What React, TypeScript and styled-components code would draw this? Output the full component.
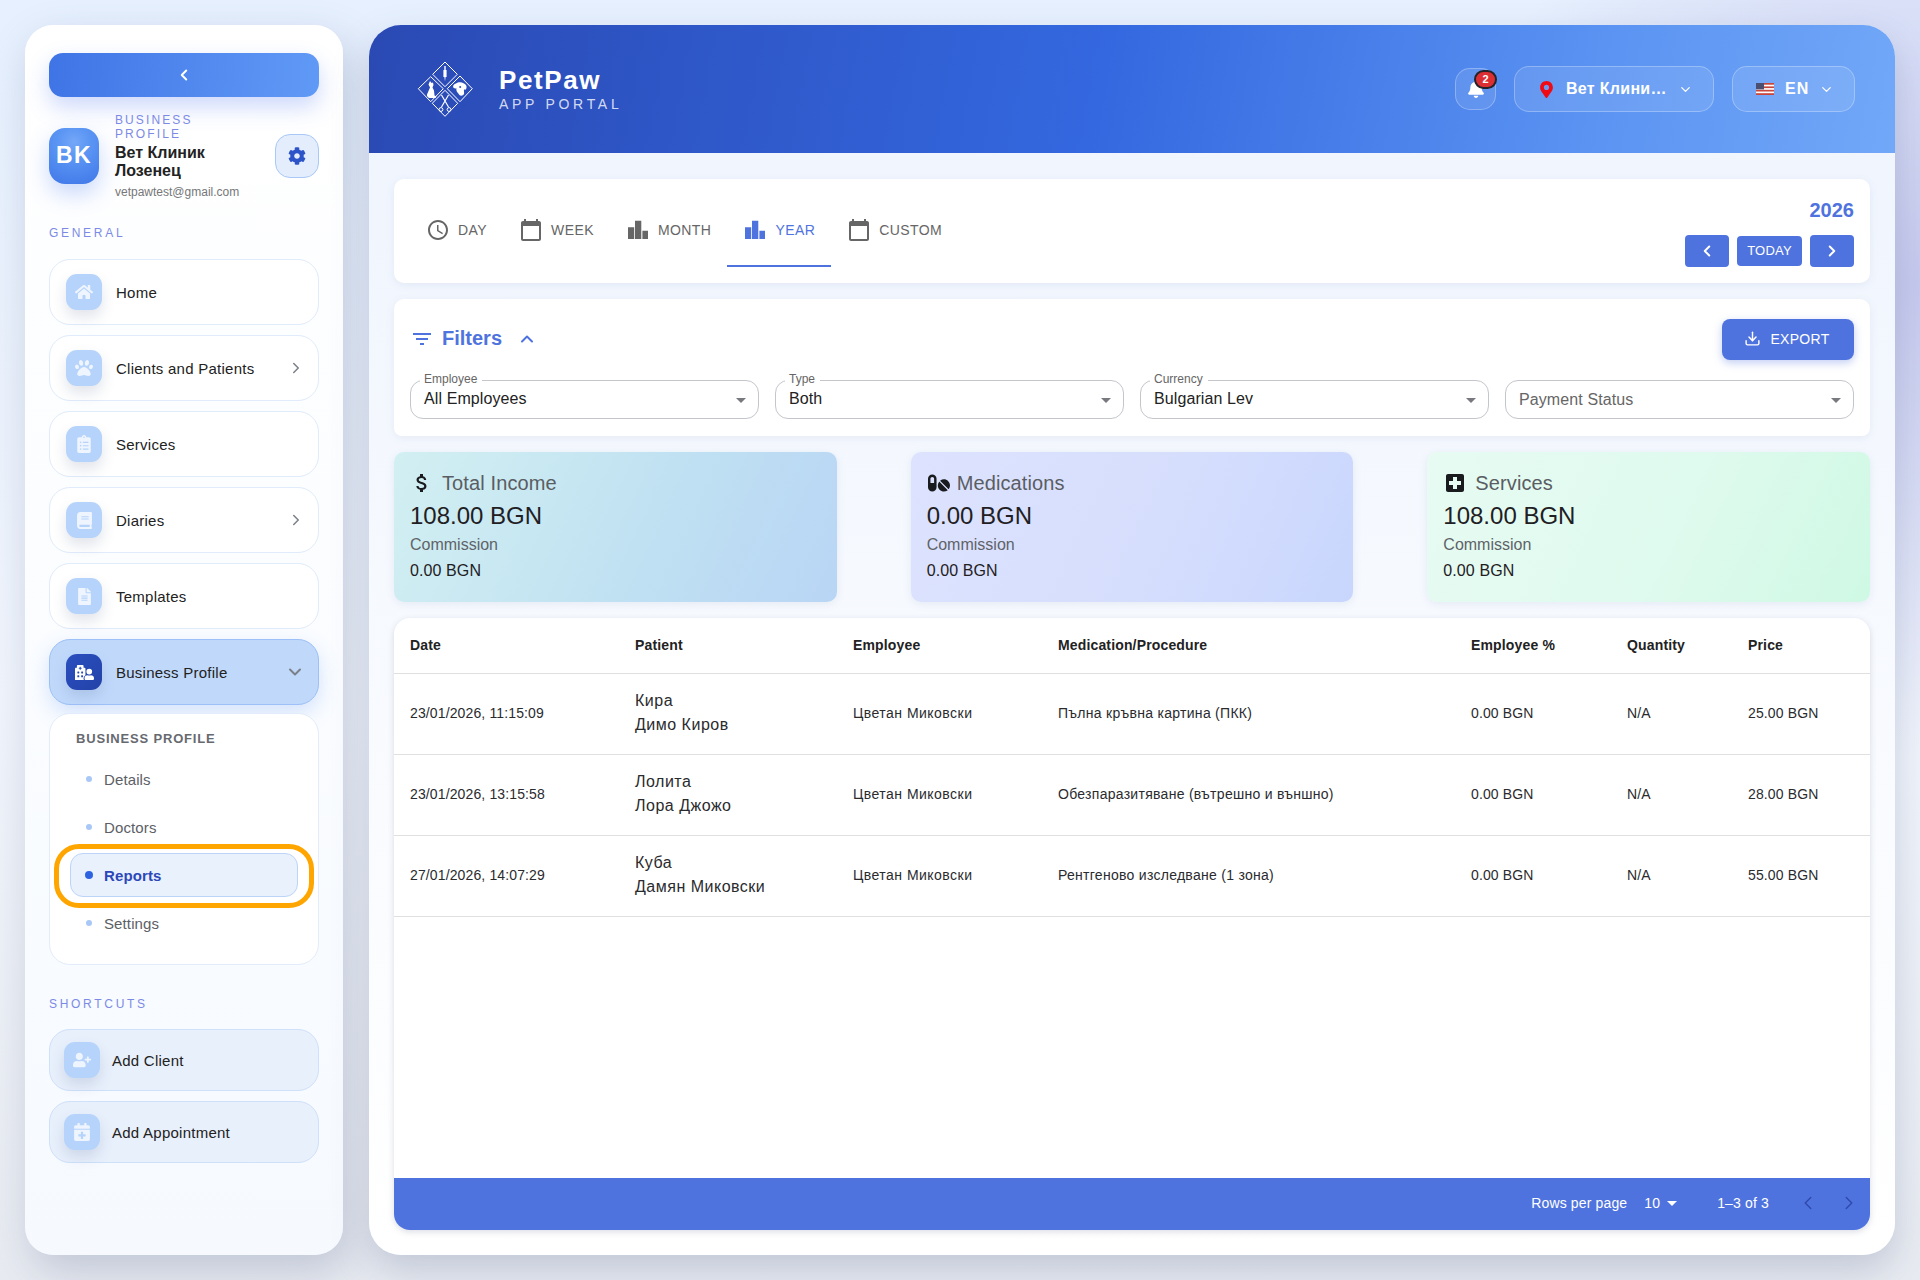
import React from "react";
import styled, { createGlobalStyle } from "styled-components";
import { ChevronLeft, ChevronRight, ChevronDown, ChevronUp, Download } from "lucide-react";
import {
  FaHome, FaPaw, FaClipboardList, FaBook, FaFileAlt, FaHospitalUser, FaUserPlus, FaCalendarPlus, FaCog, FaBell, FaMapMarkerAlt, FaPills,
} from "react-icons/fa";
import { MdAccessTime, MdCalendarToday, MdFilterList, MdArrowDropDown, MdAttachMoney, MdLocalHospital } from "react-icons/md";

const Global = createGlobalStyle`
  html, body { margin: 0; padding: 0; }
  body {
    font-family: "Liberation Sans", Arial, sans-serif;
    background:
      radial-gradient(circle at 100% 22%, #c6c9ee 0%, rgba(198,201,238,0) 22%),
      linear-gradient(180deg, #e6f0fe 0%, #f1f5fc 55%, #e8ebf1 100%);
    min-height: 1280px;
  }
  * { box-sizing: border-box; }
`;

const Page = styled.div`
  display: flex;
  gap: 26px;
  height: 1280px;
  padding: 25px;
`;

const Sidebar = styled.aside`
  width: 318px;
  flex: none;
  display: flex;
  flex-direction: column;
  padding: 28px 24px;
  border-radius: 28px;
  background: linear-gradient(180deg, #ffffff 0%, #f6faff 100%);
  box-shadow: 6px 16px 40px rgba(85, 100, 140, 0.27);
`;

const Toggle = styled.button`
  height: 44px;
  border: none;
  border-radius: 14px;
  background: linear-gradient(95deg, #3f74e6 0%, #609af6 100%);
  color: #fff;
  display: flex;
  align-items: center;
  justify-content: center;
  box-shadow: 0 10px 22px rgba(80, 120, 240, 0.28);
  padding: 0;
`;

const Profile = styled.div`
  display: flex;
  align-items: center;
  margin-top: 15px;
`;

const Avatar = styled.div`
  width: 50px;
  height: 56px;
  flex: none;
  border-radius: 16px;
  display: flex;
  align-items: center;
  justify-content: center;
  color: #fff;
  font-size: 23px;
  font-weight: 700;
  letter-spacing: 1.5px;
  background: radial-gradient(circle at 50% 25%, #74a7f7 0%, #5d97f4 30%, #3f77e8 100%);
  box-shadow: 0 10px 22px rgba(80, 130, 240, 0.3);
`;

const ProfileText = styled.div`
  width: 140px;
  margin-left: 16px;
  flex: none;
`;

const Eyebrow = styled.div`
  margin-top: 1px;
  font-size: 12px;
  line-height: 14px;
  letter-spacing: 2.1px;
  color: #7c8ae6;
`;

const ClinicName = styled.div`
  margin-top: 3px;
  font-size: 16px;
  line-height: 18px;
  font-weight: 700;
  color: #222;
`;

const Email = styled.div`
  margin-top: 5px;
  font-size: 12px;
  line-height: 14px;
  color: #777;
  white-space: nowrap;
`;

const GearButton = styled.button`
  width: 44px;
  height: 44px;
  flex: none;
  margin-left: auto;
  border-radius: 15px;
  border: 1px solid #a8c8f8;
  background: #e4edfc;
  color: #2c54c8;
  display: flex;
  align-items: center;
  justify-content: center;
  padding: 0;
`;

const SectionLabel = styled.div<{ $top: number; $bottom: number }>`
  margin-top: ${(p) => p.$top}px;
  margin-bottom: ${(p) => p.$bottom}px;
  font-size: 12px;
  line-height: 14px;
  letter-spacing: 2.7px;
  color: #7c8ae6;
`;

const NavList = styled.nav`
  display: flex;
  flex-direction: column;
  gap: 10px;
`;

const NavItem = styled.div<{ $active?: boolean }>`
  height: 66px;
  display: flex;
  align-items: center;
  padding: 0 16px;
  border-radius: 21px;
  border: 1px solid ${(p) => (p.$active ? "#9cc0f7" : "#e0ebfb")};
  background: ${(p) => (p.$active ? "#c0d9fb" : "#fff")};
  box-shadow: ${(p) => (p.$active ? "0 8px 20px rgba(100,150,245,0.25)" : "none")};
  font-size: 15px;
  letter-spacing: 0.25px;
  color: #222;
`;

const IconTile = styled.span<{ $dark?: boolean }>`
  width: 36px;
  height: 36px;
  flex: none;
  border-radius: 11px;
  display: flex;
  align-items: center;
  justify-content: center;
  color: ${(p) => (p.$dark ? "#fff" : "#eef5ff")};
  background: ${(p) => (p.$dark ? "linear-gradient(135deg,#2b4fc0,#2342a8)" : "#b6d3fb")};
  box-shadow: 0 7px 14px rgba(70, 90, 130, 0.16);
`;

const NavLabel = styled.span`
  margin-left: 14px;
  flex: 1;
`;

const NavChevron = styled.span`
  display: flex;
  color: #7a7f88;
  margin-right: -3px;
`;

const SubPanel = styled.div`
  margin-top: -2px;
  height: 252px;
  padding: 17px 20px;
  border-radius: 21px;
  border: 1px solid #e2ecfb;
  background: #fff;
`;

const SubTitle = styled.div`
  margin-left: 6px;
  font-size: 13px;
  line-height: 15px;
  font-weight: 700;
  letter-spacing: 0.82px;
  color: #666a70;
  margin-bottom: 11px;
`;

const SubList = styled.div`
  display: flex;
  flex-direction: column;
  gap: 4px;
`;

const SubItem = styled.div<{ $active?: boolean }>`
  position: relative;
  height: 44px;
  display: flex;
  align-items: center;
  gap: 12px;
  padding: 0 15px;
  border-radius: 13px;
  border: 1px solid ${(p) => (p.$active ? "#bcd4f9" : "transparent")};
  background: ${(p) => (p.$active ? "#e9f1fd" : "transparent")};
  font-size: 15px;
  letter-spacing: 0.12px;
  font-weight: ${(p) => (p.$active ? 700 : 400)};
  color: ${(p) => (p.$active ? "#2c48b8" : "#5c6066")};
`;

const Dot = styled.span<{ $active?: boolean }>`
  width: ${(p) => (p.$active ? 8 : 6)}px;
  height: ${(p) => (p.$active ? 8 : 6)}px;
  margin: 0 ${(p) => (p.$active ? -1 : 0)}px;
  border-radius: 50%;
  background: ${(p) => (p.$active ? "#2d63e0" : "#a9c8f8")};
`;

const HighlightRing = styled.span`
  position: absolute;
  left: -17px;
  right: -17px;
  top: -10px;
  bottom: -12px;
  border: 5px solid #ffa500;
  border-radius: 25px;
  pointer-events: none;
`;

const Shortcut = styled.div`
  height: 62px;
  display: flex;
  align-items: center;
  padding: 0 14px;
  border-radius: 21px;
  border: 1px solid #cfe0fb;
  background: #e8f0fc;
  font-size: 15px;
  letter-spacing: 0.25px;
  color: #222;
`;

const ShortcutLabel = styled.span`
  margin-left: 12px;
`;

const Main = styled.main`
  flex: 1;
  min-width: 0;
  display: flex;
  flex-direction: column;
  border-radius: 32px;
  overflow: hidden;
  background: linear-gradient(180deg, #eef4fe 0%, #f6f9fe 45%, #ffffff 100%);
  box-shadow: 0 16px 36px rgba(85, 100, 140, 0.26);
`;

const Header = styled.header`
  height: 128px;
  flex: none;
  padding: 0 40px 0 48px;
  display: flex;
  align-items: center;
  justify-content: space-between;
  background: linear-gradient(100deg, #2a49b3 0%, #3468e0 48%, #5a93f2 80%, #72a8f8 100%);
  color: #fff;
`;

const Brand = styled.div`
  display: flex;
  align-items: center;
  gap: 26px;
`;

const BrandText = styled.div`
  display: flex;
  flex-direction: column;
`;

const BrandName = styled.div`
  font-size: 26px;
  line-height: 30px;
  font-weight: 700;
  letter-spacing: 1.6px;
`;

const BrandSub = styled.div`
  font-size: 14px;
  line-height: 18px;
  letter-spacing: 3.7px;
  color: rgba(255, 255, 255, 0.8);
`;

const HeaderControls = styled.div`
  display: flex;
  align-items: center;
  gap: 18px;
`;

const GlassButton = styled.div<{ $w: number; $h: number; $pad?: number }>`
  position: relative;
  width: ${(p) => p.$w}px;
  height: ${(p) => p.$h}px;
  display: flex;
  align-items: center;
  justify-content: ${(p) => (p.$pad ? "flex-start" : "center")};
  padding-left: ${(p) => p.$pad ?? 0}px;
  border-radius: 15px;
  border: 1px solid rgba(255, 255, 255, 0.28);
  background: rgba(255, 255, 255, 0.1);
  color: #fff;
  font-size: 16px;
  font-weight: 700;
`;

const Badge = styled.span`
  position: absolute;
  top: 1px;
  right: -2px;
  width: 23px;
  height: 19px;
  border-radius: 10px;
  border: 2px solid #23242a;
  background: #dc2f34;
  color: #fff;
  font-size: 11px;
  line-height: 15px;
  text-align: center;
  font-weight: 700;
`;

const ClinicLabel = styled.span`
  width: 103px;
  margin: 0 9px 0 11px;
  overflow: hidden;
  white-space: nowrap;
  text-overflow: ellipsis;
  letter-spacing: 0.3px;
`;

const LangLabel = styled.span`
  margin: 0 9px 0 11px;
  letter-spacing: 1.2px;
`;

const Body = styled.div`
  flex: 1;
  min-height: 0;
  padding: 26px 25px 25px;
  display: flex;
  flex-direction: column;
  gap: 16px;
`;

const TabsCard = styled.section`
  height: 104px;
  flex: none;
  padding: 0 16px;
  border-radius: 10px;
  background: #fff;
  box-shadow: 0 2px 8px rgba(100, 120, 170, 0.1);
  display: flex;
  align-items: center;
  justify-content: space-between;
`;

const Tabs = styled.div`
  display: flex;
`;

const Tab = styled.div<{ $active?: boolean }>`
  height: 72px;
  display: flex;
  align-items: center;
  gap: 8px;
  padding: 0 16px;
  font-size: 14px;
  letter-spacing: 0.42px;
  color: ${(p) => (p.$active ? "#4f73de" : "#666")};
  border-bottom: 2px solid ${(p) => (p.$active ? "#4f73de" : "transparent")};
`;

const DateNav = styled.div`
  align-self: flex-end;
  padding-bottom: 16px;
  display: flex;
  flex-direction: column;
  align-items: flex-end;
  gap: 13px;
`;

const YearText = styled.div`
  font-size: 20px;
  line-height: 24px;
  font-weight: 700;
  color: #4f73de;
`;

const DateButtons = styled.div`
  display: flex;
  align-items: center;
  gap: 8px;
`;

const DateButton = styled.button<{ $wide?: boolean }>`
  width: ${(p) => (p.$wide ? 65 : 44)}px;
  height: ${(p) => (p.$wide ? 30 : 32)}px;
  padding: 0 0 ${(p) => (p.$wide ? 2 : 0)}px;
  border: none;
  border-radius: 4px;
  background: #4f73de;
  color: #fff;
  font-family: inherit;
  font-size: 13px;
  letter-spacing: 0.2px;
  display: flex;
  align-items: center;
  justify-content: center;
`;

const FiltersCard = styled.section`
  height: 137px;
  flex: none;
  padding: 20px 16px 17px;
  border-radius: 10px 10px 8px 8px;
  background: #fff;
  box-shadow: 0 2px 8px rgba(100, 120, 170, 0.1);
`;

const FilterTop = styled.div`
  height: 41px;
  display: flex;
  align-items: center;
  justify-content: space-between;
  margin-bottom: 20px;
`;

const FilterTitle = styled.div`
  display: flex;
  align-items: center;
  color: #4f73de;
  font-size: 20px;
  font-weight: 700;
  gap: 8px;
  padding-bottom: 2px;
`;

const FilterToggle = styled.span`
  display: flex;
  margin-left: 7px;
`;

const ExportButton = styled.button`
  width: 132px;
  height: 41px;
  padding: 0 2px 2px 0;
  border: none;
  border-radius: 8px;
  background: #4f73de;
  color: #fff;
  font-family: inherit;
  font-size: 14px;
  letter-spacing: 0.3px;
  display: flex;
  align-items: center;
  justify-content: center;
  gap: 9px;
  box-shadow: 0 3px 8px rgba(80, 115, 222, 0.35);
`;

const SelectRow = styled.div`
  display: grid;
  grid-template-columns: repeat(4, 1fr);
  gap: 16px;
`;

const SelectBox = styled.div`
  position: relative;
  height: 39px;
  display: flex;
  align-items: center;
  justify-content: space-between;
  padding: 0 5px 0 13px;
  border-radius: 13px;
  border: 1px solid #c4c6cb;
  background: #fff;
`;

const SelectValue = styled.span<{ $placeholder?: boolean }>`
  margin-top: ${(p) => (p.$placeholder ? 0 : -2)}px;
  font-size: 16px;
  letter-spacing: 0.1px;
  color: ${(p) => (p.$placeholder ? "#666" : "#222")};
`;

const FloatLabel = styled.span`
  position: absolute;
  left: 9px;
  top: -9px;
  padding: 0 5px 0 4px;
  font-size: 12px;
  line-height: 14px;
  color: #666;
  background: #fff;
`;

const Caret = styled.span`
  display: flex;
  color: #77797e;
`;

const Stats = styled.section`
  display: grid;
  grid-template-columns: repeat(3, 1fr);
  gap: 74px;
  flex: none;
`;

const StatCard = styled.div<{ $bg: string }>`
  height: 150px;
  padding: 16px;
  border-radius: 10px;
  background: ${(p) => p.$bg};
  box-shadow: 0 2px 8px rgba(100, 120, 170, 0.12);
`;

const StatTitle = styled.div<{ $gap: number }>`
  height: 30px;
  display: flex;
  align-items: center;
  gap: ${(p) => p.$gap}px;
  font-size: 20px;
  letter-spacing: 0.12px;
  color: #5a5d62;
`;

const StatIcon = styled.span`
  width: 24px;
  height: 24px;
  display: flex;
  align-items: center;
  justify-content: center;
  color: #1a1b1e;
`;

const StatValue = styled.div`
  font-size: 24px;
  line-height: 36px;
  color: #1f2023;
`;

const StatCaption = styled.div`
  font-size: 16px;
  line-height: 22px;
  color: #5f6368;
`;

const StatSub = styled.div`
  margin-top: 4px;
  font-size: 16px;
  line-height: 22px;
  letter-spacing: 0.1px;
  color: #1f2023;
`;

const TableCard = styled.section`
  flex: 1;
  min-height: 0;
  display: flex;
  flex-direction: column;
  border-radius: 16px;
  overflow: hidden;
  background: #fff;
  box-shadow: 0 2px 6px rgba(80, 90, 120, 0.2);
`;

const TableArea = styled.div`
  flex: 1;
`;

const Table = styled.table`
  width: 100%;
  table-layout: fixed;
  border-collapse: collapse;
`;

const Th = styled.th<{ $w: number }>`
  width: ${(p) => p.$w}px;
  height: 55px;
  padding: 0 16px;
  text-align: left;
  font-size: 14px;
  font-weight: 700;
  letter-spacing: 0.15px;
  color: #222;
  border-bottom: 1px solid #e0e0e0;
`;

const Td = styled.td<{ $spacing?: number }>`
  height: 81px;
  padding: 0 16px 1px;
  font-size: 14px;
  letter-spacing: ${(p) => p.$spacing ?? 0.13}px;
  color: #2a2b2e;
  border-bottom: 1px solid #e0e0e0;
`;

const PatientLine = styled.div`
  font-size: 16px;
  line-height: 24px;
  letter-spacing: 0.5px;
`;

const TableFooter = styled.div`
  height: 52px;
  flex: none;
  padding: 0 10px 2px 0;
  display: flex;
  align-items: center;
  justify-content: flex-end;
  background: #4f73de;
  color: #fff;
  font-size: 14px;
  letter-spacing: 0.15px;
`;

const RowsValue = styled.span`
  margin-left: 17px;
  display: flex;
  align-items: center;
`;

const RangeText = styled.span`
  margin-left: 33px;
`;

const PagerButton = styled.span<{ $first?: boolean }>`
  margin-left: ${(p) => (p.$first ? 28 : 19)}px;
  display: flex;
  color: #2f49ad;
`;

const Logo = () => (
  <svg width="56" height="56" viewBox="0 0 56 56" fill="none">
    <g stroke="#fff" strokeWidth="1" strokeLinejoin="round">
      <path d="M28 1 40.3 13.3 28 25.7 15.7 13.3Z" />
      <path d="M13.7 15.7 26.3 27.7 13.7 40.7 1.3 27.7Z" />
      <path d="M43 15 55.3 27.7 43 40.7 30.3 27.7Z" />
      <path d="M28 29.3 40.7 42.3 28 55.3 15.3 42.3Z" />
      <path d="M24.5 46 31.5 34M31.5 46 24.5 34" strokeWidth="1.2" />
      <circle cx="24" cy="48.5" r="1.9" />
      <circle cx="32" cy="48.5" r="1.9" />
    </g>
    <g fill="#fff">
      <rect x="27.3" y="5" width="1.4" height="4" />
      <path d="M26.4 9h3.2v7h-1l-.6 4.5-.6-4.5h-1z" />
      <path d="M13 20l1.5 2 1.5-.5.5 2.5-1 2.5 1.5 3 .5 5 2 1-1 1.5-6 0c-2-.6-2.8-2-2.5-3.5l3-7-1.5-3z" />
      <path d="M39 22.5c2-1.6 5.5-1.8 7.5-.2 2 .6 3.5 2.4 3 4.6-.4 1.7-1.6 2.2-2.5 1.4-.3 1.8.4 3.4 0 4.8-1 1.8-3.4 2-4.6.9-.5-1.2-1.5-2-2.4-3.3-.8-1.2-.7-2.5-.6-3.5-1.5.6-3.1-.1-3.3-1.4-.1-1.5 1.1-2.6 2.9-3.3z" />
    </g>
    <circle cx="43.2" cy="26" r="1" fill="#2f55c4" />
  </svg>
);

const Flag = () => (
  <svg width="18" height="12" viewBox="0 0 18 12">
    <rect width="18" height="12" fill="#fff" />
    <g fill="#c8463c">
      <rect y="0" width="18" height="1.7" />
      <rect y="3.4" width="18" height="1.7" />
      <rect y="6.8" width="18" height="1.7" />
      <rect y="10.2" width="18" height="1.8" />
    </g>
    <rect width="8" height="6.4" fill="#4a4f72" />
  </svg>
);

const BarsIcon = () => (
  <svg width="24" height="24" viewBox="0 0 24 24" fill="currentColor">
    <path d="M2 9.3h6.2V21H2zM9 2.7h6.3V21H9zM16.4 12.7H22V21h-5.6z" />
  </svg>
);

const generalItems = [
  { label: "Home", icon: <FaHome size={18} /> },
  { label: "Clients and Patients", icon: <FaPaw size={18} />, more: true },
  { label: "Services", icon: <FaClipboardList size={18} /> },
  { label: "Diaries", icon: <FaBook size={17} />, more: true },
  { label: "Templates", icon: <FaFileAlt size={17} /> },
];

const subItems = ["Details", "Doctors", "Reports", "Settings"];

const tabs = [
  { label: "DAY", icon: <MdAccessTime size={24} /> },
  { label: "WEEK", icon: <MdCalendarToday size={24} /> },
  { label: "MONTH", icon: <BarsIcon /> },
  { label: "YEAR", icon: <BarsIcon />, active: true },
  { label: "CUSTOM", icon: <MdCalendarToday size={24} /> },
];

const selects = [
  { label: "Employee", value: "All Employees" },
  { label: "Type", value: "Both" },
  { label: "Currency", value: "Bulgarian Lev" },
  { value: "Payment Status" },
];

const stats = [
  {
    title: "Total Income",
    value: "108.00 BGN",
    gap: 8,
    icon: <MdAttachMoney size={24} />,
    bg: "linear-gradient(115deg,#d2f0f2 0%,#bfe0f2 60%,#b9d5f5 100%)",
  },
  {
    title: "Medications",
    value: "0.00 BGN",
    gap: 6,
    icon: <FaPills size={22} />,
    bg: "linear-gradient(115deg,#dde3fe 0%,#d6defd 55%,#c8d6fd 100%)",
  },
  {
    title: "Services",
    value: "108.00 BGN",
    gap: 8,
    icon: <MdLocalHospital size={24} />,
    bg: "linear-gradient(115deg,#e7fbf3 0%,#dffaee 55%,#cff9e4 100%)",
  },
];

const columns = [
  { label: "Date", w: 225 },
  { label: "Patient", w: 218 },
  { label: "Employee", w: 205 },
  { label: "Medication/Procedure", w: 413 },
  { label: "Employee %", w: 156 },
  { label: "Quantity", w: 121 },
  { label: "Price", w: 138 },
];

const rows = [
  { date: "23/01/2026, 11:15:09", pet: "Кира", owner: "Димо Киров", item: "Пълна кръвна картина (ПКК)", price: "25.00 BGN" },
  { date: "23/01/2026, 13:15:58", pet: "Лолита", owner: "Лора Джожо", item: "Обезпаразитяване (вътрешно и външно)", price: "28.00 BGN" },
  { date: "27/01/2026, 14:07:29", pet: "Куба", owner: "Дамян Миковски", item: "Рентгеново изследване (1 зона)", price: "55.00 BGN" },
];

export default function App() {
  return (
    <>
      <Global />
      <Page>
        <Sidebar>
          <Toggle>
            <ChevronLeft size={18} strokeWidth={2.6} />
          </Toggle>
          <Profile>
            <Avatar>BK</Avatar>
            <ProfileText>
              <Eyebrow>BUSINESS PROFILE</Eyebrow>
              <ClinicName>Вет Клиник Лозенец</ClinicName>
              <Email>vetpawtest@gmail.com</Email>
            </ProfileText>
            <GearButton>
              <FaCog size={18} />
            </GearButton>
          </Profile>

          <SectionLabel $top={27} $bottom={19}>GENERAL</SectionLabel>
          <NavList>
            {generalItems.map((item) => (
              <NavItem key={item.label}>
                <IconTile>{item.icon}</IconTile>
                <NavLabel>{item.label}</NavLabel>
                {item.more && (
                  <NavChevron>
                    <ChevronRight size={18} />
                  </NavChevron>
                )}
              </NavItem>
            ))}
            <NavItem $active>
              <IconTile $dark>
                <FaHospitalUser size={19} />
              </IconTile>
              <NavLabel>Business Profile</NavLabel>
              <NavChevron>
                <ChevronDown size={20} strokeWidth={2.4} />
              </NavChevron>
            </NavItem>
            <SubPanel>
              <SubTitle>BUSINESS PROFILE</SubTitle>
              <SubList>
                {subItems.map((label) => {
                  const active = label === "Reports";
                  return (
                    <SubItem key={label} $active={active}>
                      <Dot $active={active} />
                      {label}
                      {active && <HighlightRing />}
                    </SubItem>
                  );
                })}
              </SubList>
            </SubPanel>
          </NavList>

          <SectionLabel $top={32} $bottom={18}>SHORTCUTS</SectionLabel>
          <NavList>
            <Shortcut>
              <IconTile><FaUserPlus size={18} /></IconTile>
              <ShortcutLabel>Add Client</ShortcutLabel>
            </Shortcut>
            <Shortcut>
              <IconTile><FaCalendarPlus size={18} /></IconTile>
              <ShortcutLabel>Add Appointment</ShortcutLabel>
            </Shortcut>
          </NavList>
        </Sidebar>

        <Main>
          <Header>
            <Brand>
              <Logo />
              <BrandText>
                <BrandName>PetPaw</BrandName>
                <BrandSub>APP PORTAL</BrandSub>
              </BrandText>
            </Brand>
            <HeaderControls>
              <GlassButton $w={41} $h={42}>
                <FaBell size={18} />
                <Badge>2</Badge>
              </GlassButton>
              <GlassButton $w={200} $h={46} $pad={23}>
                <FaMapMarkerAlt size={17} color="#f00a14" />
                <ClinicLabel>Вет Клиник Лозенец</ClinicLabel>
                <ChevronDown size={15} />
              </GlassButton>
              <GlassButton $w={123} $h={46} $pad={23}>
                <Flag />
                <LangLabel>EN</LangLabel>
                <ChevronDown size={15} />
              </GlassButton>
            </HeaderControls>
          </Header>

          <Body>
            <TabsCard>
              <Tabs>
                {tabs.map((t) => (
                  <Tab key={t.label} $active={t.active}>
                    {t.icon}
                    {t.label}
                  </Tab>
                ))}
              </Tabs>
              <DateNav>
                <YearText>2026</YearText>
                <DateButtons>
                  <DateButton><ChevronLeft size={18} strokeWidth={2.6} /></DateButton>
                  <DateButton $wide>TODAY</DateButton>
                  <DateButton><ChevronRight size={18} strokeWidth={2.6} /></DateButton>
                </DateButtons>
              </DateNav>
            </TabsCard>

            <FiltersCard>
              <FilterTop>
                <FilterTitle>
                  <MdFilterList size={24} />
                  Filters
                  <FilterToggle><ChevronUp size={20} strokeWidth={2.4} /></FilterToggle>
                </FilterTitle>
                <ExportButton>
                  <Download size={17} />
                  EXPORT
                </ExportButton>
              </FilterTop>
              <SelectRow>
                {selects.map((s) => (
                  <SelectBox key={s.value}>
                    {s.label && <FloatLabel>{s.label}</FloatLabel>}
                    <SelectValue $placeholder={!s.label}>{s.value}</SelectValue>
                    <Caret><MdArrowDropDown size={24} /></Caret>
                  </SelectBox>
                ))}
              </SelectRow>
            </FiltersCard>

            <Stats>
              {stats.map((s) => (
                <StatCard key={s.title} $bg={s.bg}>
                  <StatTitle $gap={s.gap}>
                    <StatIcon>{s.icon}</StatIcon>
                    {s.title}
                  </StatTitle>
                  <StatValue>{s.value}</StatValue>
                  <StatCaption>Commission</StatCaption>
                  <StatSub>0.00 BGN</StatSub>
                </StatCard>
              ))}
            </Stats>

            <TableCard>
              <TableArea>
                <Table>
                  <thead>
                    <tr>
                      {columns.map((c) => (
                        <Th key={c.label} $w={c.w}>{c.label}</Th>
                      ))}
                    </tr>
                  </thead>
                  <tbody>
                    {rows.map((r) => (
                      <tr key={r.date}>
                        <Td>{r.date}</Td>
                        <Td>
                          <PatientLine>{r.pet}</PatientLine>
                          <PatientLine>{r.owner}</PatientLine>
                        </Td>
                        <Td $spacing={0.47}>Цветан Миковски</Td>
                        <Td $spacing={0.28}>{r.item}</Td>
                        <Td>0.00 BGN</Td>
                        <Td>N/A</Td>
                        <Td>{r.price}</Td>
                      </tr>
                    ))}
                  </tbody>
                </Table>
              </TableArea>
              <TableFooter>
                Rows per page
                <RowsValue>
                  10
                  <MdArrowDropDown size={24} />
                </RowsValue>
                <RangeText>1–3 of 3</RangeText>
                <PagerButton $first><ChevronLeft size={22} strokeWidth={1.6} /></PagerButton>
                <PagerButton><ChevronRight size={22} strokeWidth={1.6} /></PagerButton>
              </TableFooter>
            </TableCard>
          </Body>
        </Main>
      </Page>
    </>
  );
}
